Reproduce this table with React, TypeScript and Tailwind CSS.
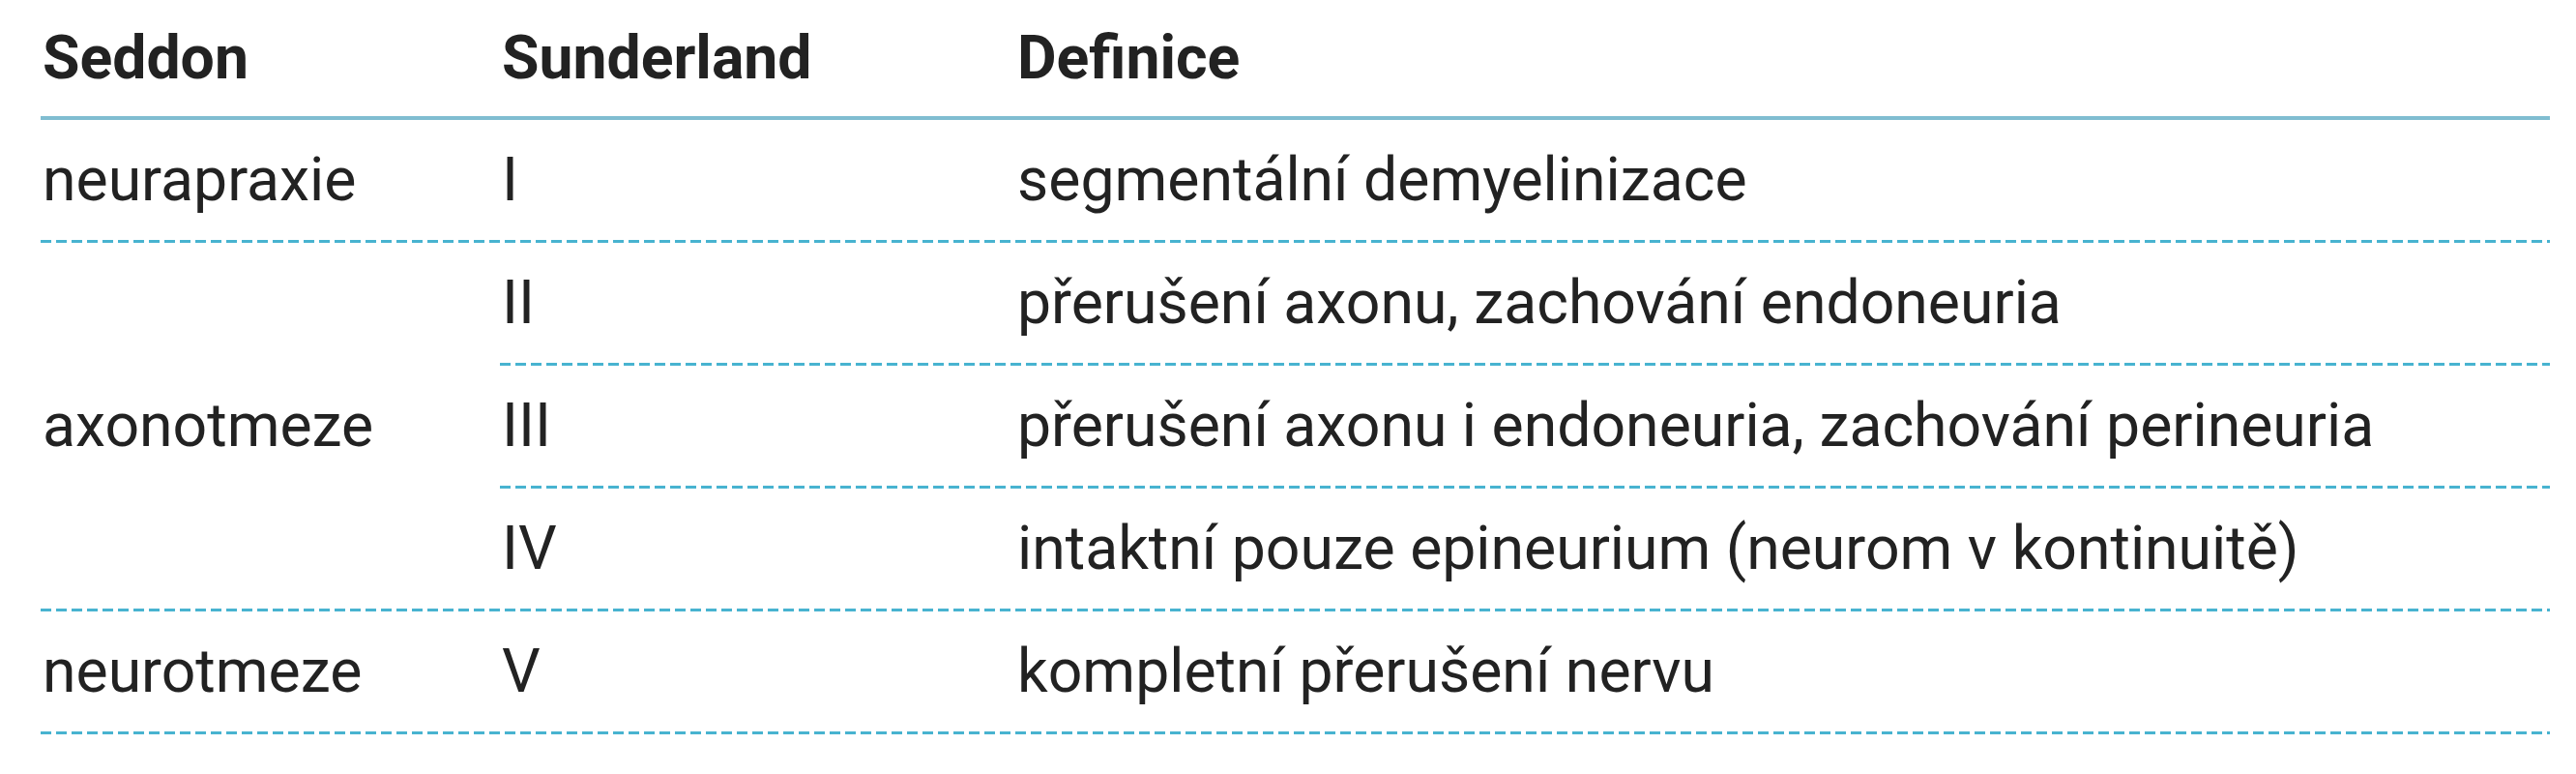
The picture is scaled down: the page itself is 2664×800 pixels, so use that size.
import React from "react";

const font = "font-['Roboto',sans-serif]";
const bold = "font-bold";
const dash =
  "bg-[linear-gradient(to_right,#48b3d0_11px,transparent_11px)] bg-[length:16px_3px] bg-repeat-x";

export default function App() {
  return (
    <div className={`bg-white w-[2664px] h-[800px] text-[#222222] ${font}`}>
      <div className="ml-[42px] grid grid-cols-[475px_533px_1587px] grid-rows-[120px_4px_124px_3px_124px_3px_124px_3px_124px_3px_124px_3px] text-[62.5px] leading-none">
        {/* header */}
        <div className={`row-start-1 col-start-1 flex items-center pl-[2px] ${bold}`}>Seddon</div>
        <div className={`row-start-1 col-start-2 flex items-center pl-[2px] ${bold}`}>Sunderland</div>
        <div className={`row-start-1 col-start-3 flex items-center pl-[2px] ${bold}`}>Definice</div>
        <div className="row-start-2 col-start-1 col-span-3 bg-[#80bdd1]" />

        {/* neurapraxie */}
        <div className="row-start-3 col-start-1 flex items-center pl-[2px]">neurapraxie</div>
        <div className="row-start-3 col-start-2 flex items-center pl-[2px]">I</div>
        <div className="row-start-3 col-start-3 flex items-center pl-[2px]">segmentální demyelinizace</div>
        <div className={`row-start-4 col-start-1 col-span-3 ${dash}`} />

        {/* axonotmeze */}
        <div className="row-start-5 row-span-5 col-start-1 flex items-center pl-[2px]">axonotmeze</div>
        <div className="row-start-5 col-start-2 flex items-center pl-[2px]">II</div>
        <div className="row-start-5 col-start-3 flex items-center pl-[2px]">přerušení axonu, zachování endoneuria</div>
        <div className={`row-start-6 col-start-2 col-span-2 ${dash}`} />
        <div className="row-start-7 col-start-2 flex items-center pl-[2px]">III</div>
        <div className="row-start-7 col-start-3 flex items-center pl-[2px]">přerušení axonu i endoneuria, zachování perineuria</div>
        <div className={`row-start-8 col-start-2 col-span-2 ${dash}`} />
        <div className="row-start-9 col-start-2 flex items-center pl-[2px]">IV</div>
        <div className="row-start-9 col-start-3 flex items-center pl-[2px]">intaktní pouze epineurium (neurom v kontinuitě)</div>
        <div className={`row-start-10 col-start-1 col-span-3 ${dash}`} />

        {/* neurotmeze */}
        <div className="row-start-11 col-start-1 flex items-center pl-[2px]">neurotmeze</div>
        <div className="row-start-11 col-start-2 flex items-center pl-[2px]">V</div>
        <div className="row-start-11 col-start-3 flex items-center pl-[2px]">kompletní přerušení nervu</div>
        <div className={`row-start-12 col-start-1 col-span-3 ${dash}`} />
      </div>
    </div>
  );
}
